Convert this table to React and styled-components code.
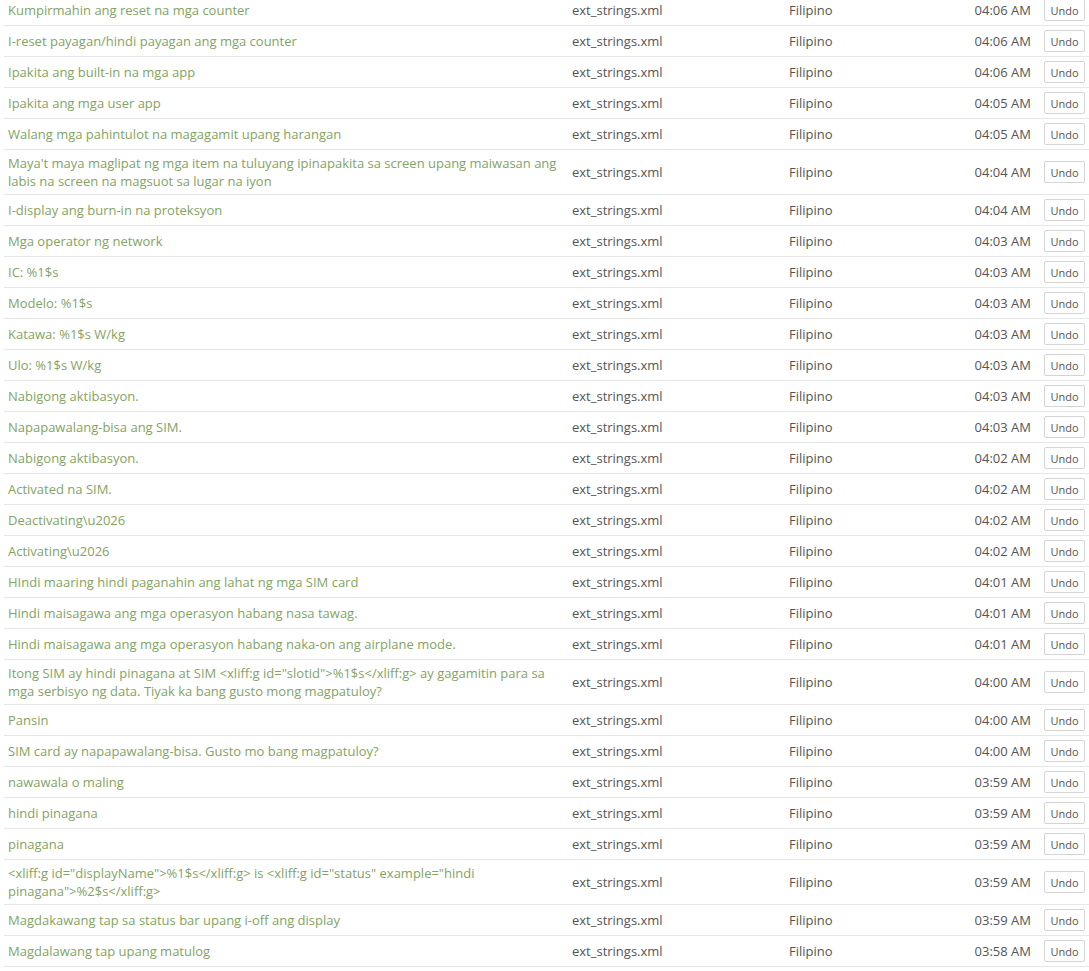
import React from 'react';
import styled, { createGlobalStyle } from 'styled-components';

const GlobalStyle = createGlobalStyle`
  html, body {
    margin: 0;
    padding: 0;
    background: #fff;
    overflow: hidden;
  }
  body {
    font-family: "Open Sans", "Liberation Sans", sans-serif;
    font-size: 13px;
  }
`;

const StyledList = styled.div`
  margin: -5px 0 0 4px;
`;

const StyledRow = styled.div`
  display: grid;
  grid-template-columns: 564px 217px 1fr auto 55px;
  align-items: center;
  border-bottom: 1px solid #e6e6e6;
`;

const StyledCell = styled.div`
  padding: 4px;
  line-height: 18px;
  color: #555;
  white-space: ${(props) => (props.nowrap ? 'nowrap' : 'normal')};
`;

const StyledSource = styled(StyledCell)`
  color: #84a363;
`;

const StyledTime = styled(StyledCell)`
  padding-right: 3px;
`;

const StyledUndo = styled.button`
  font-family: "Open Sans", "Liberation Sans", sans-serif;
  font-size: 11px;
  font-weight: 400;
  color: #555;
  background: #fff;
  border: 1px solid #d4d4d4;
  border-radius: 2px;
  height: 22px;
  width: 41px;
  padding: 0;
  margin: 4px 0 4px 10px;
  cursor: pointer;
`;

const rows = [
  ['Kumpirmahin ang reset na mga counter', '04:06 AM'],
  ['I-reset payagan/hindi payagan ang mga counter', '04:06 AM'],
  ['Ipakita ang built-in na mga app', '04:06 AM'],
  ['Ipakita ang mga user app', '04:05 AM'],
  ['Walang mga pahintulot na magagamit upang harangan', '04:05 AM'],
  ["Maya't maya maglipat ng mga item na tuluyang ipinapakita sa screen upang maiwasan ang labis na screen na magsuot sa lugar na iyon", '04:04 AM'],
  ['I-display ang burn-in na proteksyon', '04:04 AM'],
  ['Mga operator ng network', '04:03 AM'],
  ['IC: %1$s', '04:03 AM'],
  ['Modelo: %1$s', '04:03 AM'],
  ['Katawa: %1$s W/kg', '04:03 AM'],
  ['Ulo: %1$s W/kg', '04:03 AM'],
  ['Nabigong aktibasyon.', '04:03 AM'],
  ['Napapawalang-bisa ang SIM.', '04:03 AM'],
  ['Nabigong aktibasyon.', '04:02 AM'],
  ['Activated na SIM.', '04:02 AM'],
  ['Deactivating\\u2026', '04:02 AM'],
  ['Activating\\u2026', '04:02 AM'],
  ['HIndi maaring hindi paganahin ang lahat ng mga SIM card', '04:01 AM'],
  ['Hindi maisagawa ang mga operasyon habang nasa tawag.', '04:01 AM'],
  ['Hindi maisagawa ang mga operasyon habang naka-on ang airplane mode.', '04:01 AM'],
  ['Itong SIM ay hindi pinagana at SIM <xliff:g id="slotid">%1$s</xliff:g> ay gagamitin para sa mga serbisyo ng data. Tiyak ka bang gusto mong magpatuloy?', '04:00 AM'],
  ['Pansin', '04:00 AM'],
  ['SIM card ay napapawalang-bisa. Gusto mo bang magpatuloy?', '04:00 AM'],
  ['nawawala o maling', '03:59 AM'],
  ['hindi pinagana', '03:59 AM'],
  ['pinagana', '03:59 AM'],
  ['<xliff:g id="displayName">%1$s</xliff:g> is <xliff:g id="status" example="hindi pinagana">%2$s</xliff:g>', '03:59 AM'],
  ['Magdakawang tap sa status bar upang i-off ang display', '03:59 AM'],
  ['Magdalawang tap upang matulog', '03:58 AM'],
];

function App() {
  return (
    <>
      <GlobalStyle />
      <StyledList>
        {rows.map(([text, time], i) => (
          <StyledRow key={i}>
            <StyledSource>{text}</StyledSource>
            <StyledCell>ext_strings.xml</StyledCell>
            <StyledCell>Filipino</StyledCell>
            <StyledTime nowrap>{time}</StyledTime>
            <div><StyledUndo type="button">Undo</StyledUndo></div>
          </StyledRow>
        ))}
      </StyledList>
    </>
  );
}

export default App;
